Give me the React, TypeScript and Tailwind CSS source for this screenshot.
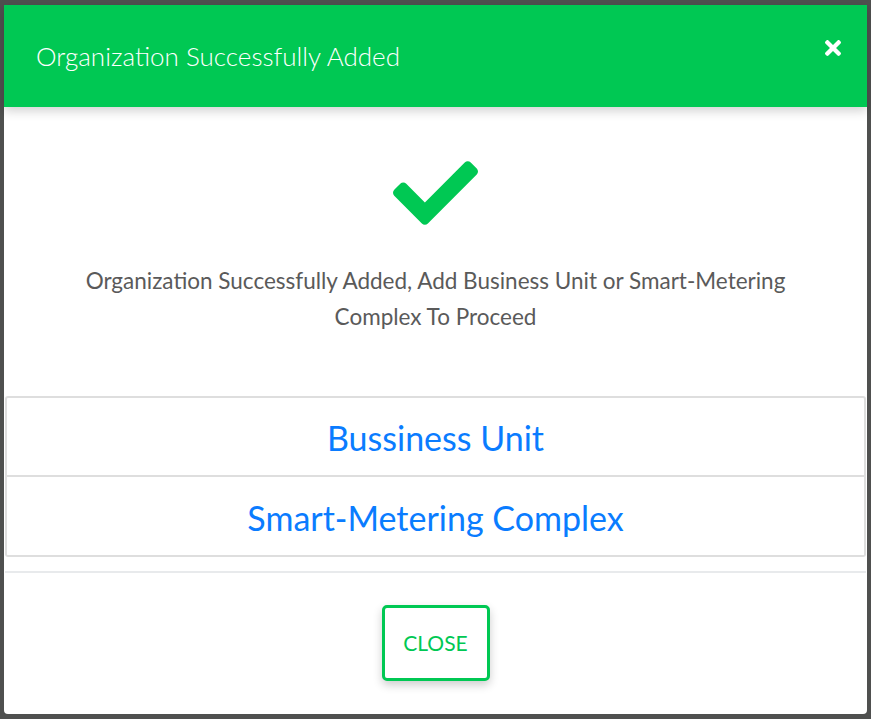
import React from "react";

export default function App() {
  return (
    <div
      className="w-[871px] h-[719px] bg-[#4f504f] overflow-hidden pt-[5px] pl-[4px]"
      style={{ fontFamily: "Lato, 'Open Sans', sans-serif" }}
    >
      <div className="w-[863px] h-[709px] bg-white rounded-[4px] flex flex-col">
        <div className="h-[102px] bg-[#00c853] flex items-center justify-between pl-[32px] pr-[26px] shadow-[0_4px_10px_rgba(0,0,0,0.18)] relative z-10 shrink-0">
          <div className="text-white text-[26px] font-light">Organization Successfully Added</div>
          <svg viewBox="0 80 352 352" className="w-[16px] h-[16px] mb-[16px]" fill="#fff">
            <path d="M242.72 256l100.07-100.07c12.28-12.28 12.28-32.190 0-44.48l-22.24-22.24c-12.28-12.28-32.19-12.28-44.48 0L176 189.28 75.930 89.21c-12.28-12.28-32.19-12.28-44.48 0L9.21 111.45c-12.28 12.28-12.28 32.19 0 44.48L109.28 256 9.21 356.07c-12.28 12.28-12.28 32.19 0 44.48l22.24 22.24c12.28 12.28 32.2 12.28 44.48 0L176 322.72l100.07 100.07c12.28 12.28 32.2 12.28 44.48 0l22.24-22.24c12.28-12.28 12.28-32.19 0-44.48L242.72 256z" />
          </svg>
        </div>
        <div className="flex flex-col items-center pt-[54px]">
          <svg viewBox="0 65 512 382" className="w-[85px] h-[64px]" fill="#00c853">
            <path d="M173.898 439.404l-166.4-166.4c-9.997-9.997-9.997-26.206 0-36.204l36.203-36.204c9.997-9.998 26.207-9.998 36.204 0L192 312.69 432.095 72.596c9.997-9.997 26.207-9.997 36.204 0l36.203 36.204c9.997 9.997 9.997 26.206 0 36.204l-294.4 294.401c-9.998 9.997-26.207 9.997-36.204-.001z" />
          </svg>
          <p className="mt-[38px] w-[740px] text-center text-[22.5px] leading-[36px] text-[#5a5a5a]">
            Organization Successfully Added, Add Business Unit or Smart-Metering Complex To Proceed
          </p>
        </div>
        <div className="mt-[61px] ml-[1px] mr-[1px] flex flex-col">
          <div className="h-[81px] border-2 border-[#dedede] rounded-t-[3px] flex items-center justify-center text-[34px] text-[#0a7cff]">
            <span className="mt-[2px]">Bussiness Unit</span>
          </div>
          <div className="h-[80px] border-2 border-t-0 border-[#dedede] rounded-b-[3px] flex items-center justify-center text-[34px] text-[#0a7cff]">
            <span className="mt-[2px]">Smart-Metering Complex</span>
          </div>
        </div>
        <div className="mt-[14px] mx-[1px] h-[2px] bg-[#e8eaec]" />
        <div className="flex justify-center pt-[32px]">
          <button className="w-[108px] h-[76px] border-[3px] border-[#00c853] rounded-[5px] bg-white text-[#00c853] text-[21px] shadow-[0_4px_10px_rgba(0,0,0,0.2)]">
            CLOSE
          </button>
        </div>
      </div>
    </div>
  );
}
